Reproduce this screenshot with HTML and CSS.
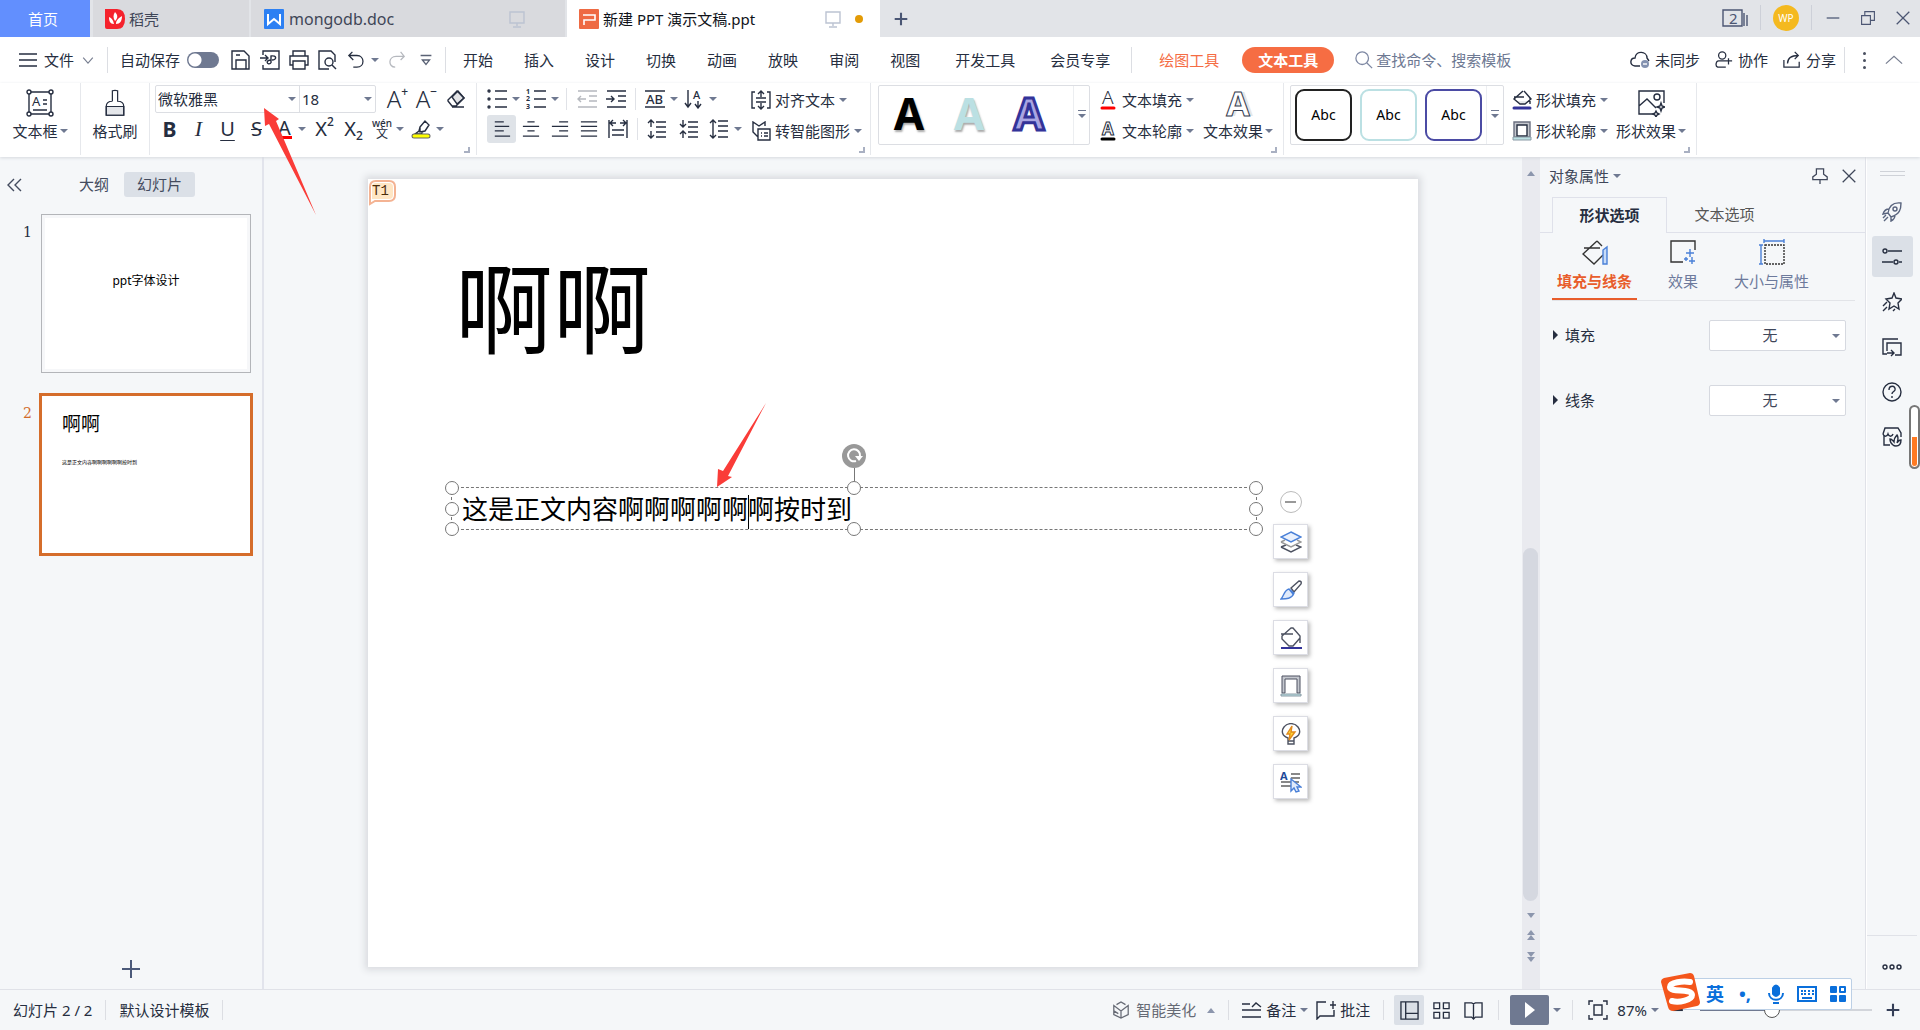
FILE: index.html
```
<!DOCTYPE html>
<html lang="zh-CN">
<head>
<meta charset="utf-8">
<title>新建 PPT 演示文稿.ppt</title>
<link rel="stylesheet" href="styles.css">
</head>
<body>
<svg class="sprite" aria-hidden="true">
  <symbol id="menu" viewBox="0 0 20 20"><path d="M1 4h18M1 10h18M1 16h18"/></symbol>
  <symbol id="down" viewBox="0 0 20 20"><path d="M4 7l6 7 6-7"/></symbol>
  <symbol id="up" viewBox="0 0 20 20"><path d="M1 14l9-8 9 8"/></symbol>
  <symbol id="save" viewBox="0 0 20 20"><path d="M1 1h12l5 5v13H1zM5 19v-9h10v9M5 5h4"/></symbol>
  <symbol id="export" viewBox="0 0 20 20"><path d="M3 5V1h16v18H3v-4M0 8h7M5 5l3 3-3 3M11 13V6c6-1 6 4 1 4M11 10c-6 0-4 6 0 3"/></symbol>
  <symbol id="print" viewBox="0 0 20 20"><path d="M4 6V1h12v5M4 15H1V6h18v9h-3M4 11h12v8H4z"/></symbol>
  <symbol id="preview" viewBox="0 0 20 20"><path d="M11 19H1V1h12l4 4v7"/><circle cx="11" cy="12" r="4"/><path d="M14 15l4 4"/></symbol>
  <symbol id="undo" viewBox="0 0 20 20"><path d="M6 1L2 5l5 5M2 5h9c9 0 9 13 0 13H7"/></symbol>
  <symbol id="redo" viewBox="0 0 20 20"><path d="M14 1l4 5-4 4M18 6H9c-9 0-9 12-1 12"/></symbol>
  <symbol id="more" viewBox="0 0 20 20"><path d="M4 5h12M6 10l4 5 4-5z"/></symbol>
  <symbol id="search" viewBox="0 0 20 20"><circle cx="8" cy="8" r="7"/><path d="M13 13l6 6"/></symbol>
  <symbol id="cloud" viewBox="0 0 20 20"><path d="M10 16H5c-6-1-5-8 0-8 1-8 12-7 12 0l2 3"/><circle cx="15" cy="14" r="4" fill="#8492b0" stroke="none"/><path stroke="#fff" d="M13 14h4"/></symbol>
  <symbol id="people" viewBox="0 0 20 20"><circle cx="8" cy="5" r="4"/><path d="M12 18H3c-3-1-2-7 1-7h8M15 8v7M12 11h7"/></symbol>
  <symbol id="share" viewBox="0 0 20 20"><path d="M1 10v8h17v-6M5 14c0-7 6-9 12-9M13 1l4 4-4 4"/></symbol>
  <symbol id="textbox" viewBox="0 0 28 28"><path d="M3 3h22v22H3zM7 21h14M17 11h4M17 15h4"/><g fill="#fff"><circle cx="3" cy="3" r="2"/><circle cx="25" cy="3" r="2"/><circle cx="3" cy="25" r="2"/><circle cx="25" cy="25" r="2"/></g><text class="glyph" x="6" y="17" font-size="13">A</text></symbol>
  <symbol id="brush" viewBox="0 0 28 32"><path fill="#e4e6ea" d="M4 20h20v10H4z"/><path d="M11 14V2q3-1 6 0v12q7 0 7 6v10H4V20q0-6 7-6"/></symbol>
  <symbol id="eraser" viewBox="0 0 20 20"><path fill="#e2e3e6" d="M6 8l6-6 6 7-7 6z"/><path d="M2 11l9-9 7 7-8 8H6l-4-5zM6 18h12"/></symbol>
  <symbol id="highlight" viewBox="0 0 20 20"><path d="M9 8l5-6 4 4-4 6-5 1zM9 8l-1 4-4 3h6l2-2"/><path stroke="#666" stroke-width="5" stroke-linecap="round" d="M3 17h14"/><path stroke="#ff0" stroke-width="3" stroke-linecap="round" d="M3 17h14"/></symbol>
  <symbol id="bullets" viewBox="0 0 20 20"><path d="M8 2h12M8 10h12M8 18h12"/><circle cx="2" cy="2" r="1"/><circle cx="2" cy="10" r="1"/><circle cx="2" cy="18" r="1"/></symbol>
  <symbol id="numbers" viewBox="0 0 20 20"><path d="M8 2h12M8 10h12M8 18h12"/><g class="glyph heavy" font-size="7"><text x="0" y="5">1</text><text x="0" y="12">2</text><text x="0" y="20">3</text></g></symbol>
  <symbol id="outdent" viewBox="0 0 20 20"><path d="M1 2h19M12 7h8M12 12h8M1 18h19M9 10H1M4 7l-3 3 3 3"/></symbol>
  <symbol id="indent" viewBox="0 0 20 20"><path d="M1 2h19M12 7h8M12 12h8M1 18h19M0 10h8M5 7l3 3-3 3"/></symbol>
  <symbol id="ab" viewBox="0 0 20 20"><path d="M0 2h20M0 18h20"/><text class="glyph medium" x="1" y="15" font-size="13">AB</text></symbol>
  <symbol id="sort" viewBox="0 0 20 20"><path d="M4 1v17M1 14l3 4 3-4M14 12v6M11 15l3 4 3-4"/><text class="glyph medium" x="9" y="10" font-size="11">A</text></symbol>
  <symbol id="al-left" viewBox="0 0 20 20"><path d="M2 2h10M2 7h16M2 12h10M2 18h17"/></symbol>
  <symbol id="al-center" viewBox="0 0 20 20"><path d="M6 2h8M1 7h18M6 12h8M1 18h18"/></symbol>
  <symbol id="al-right" viewBox="0 0 20 20"><path d="M9 2h10M1 7h18M9 12h10M1 18h18"/></symbol>
  <symbol id="al-full" viewBox="0 0 20 20"><path d="M1 2h18M1 7h18M1 12h18M1 18h18"/></symbol>
  <symbol id="distribute" viewBox="0 0 20 20"><path d="M1 1v18M19 1v18M3 4h5M12 4h5M5 1L2 4l3 3M15 1l3 3-3 3M4 11h12M4 16h12"/></symbol>
  <symbol id="sp-up" viewBox="0 0 20 20"><path d="M9 3h10M9 8h10M9 13h10M9 18h10M4 1v7M1 4l3-3 3 3M4 12v7M1 16l3 3 3-3"/></symbol>
  <symbol id="sp-down" viewBox="0 0 20 20"><path d="M9 3h10M9 8h10M9 13h10M9 18h10M4 1v7M1 5l3 3 3-3M4 12v7M1 15l3-3 3 3"/></symbol>
  <symbol id="sp-line" viewBox="0 0 20 20"><path d="M9 2h10M9 7h10M9 12h10M9 18h10M4 1v18M1 4l3-3 3 3M1 16l3 3 3-3"/></symbol>
  <symbol id="al-text" viewBox="0 0 20 20"><path d="M4 2H1v16h3M16 2h3v16h-3M5 8h10M5 12h10M10 7V1M7 4l3-3 3 3M10 13v6M7 16l3 3 3-3"/></symbol>
  <symbol id="smart" viewBox="0 0 20 20"><path d="M7 16l-5-5V1l6 4 6-4v4M7 8h12v11H7zM10 12h1M13 12h4M10 15h1M13 15h4"/></symbol>
  <symbol id="textfill" viewBox="0 0 20 20"><text class="glyph light" x="4" y="14" font-size="19">A</text><path stroke="#f00" stroke-width="3" stroke-linecap="round" d="M4 18h12"/></symbol>
  <symbol id="textline" viewBox="0 0 20 20"><text class="glyph-outline" x="4" y="14" font-size="17">A</text><path stroke="#000" stroke-width="3" stroke-linecap="round" d="M4 18h12"/></symbol>
  <symbol id="bucket" viewBox="0 0 20 20"><path fill="#e8eaec" stroke="none" d="M4 11h13l-4 4H8z"/><path d="M2 7h10M11 1L2 9l6 5h5l6-5-7-8M18 8v6"/><path stroke="#333399" stroke-width="3" stroke-linecap="round" d="M2 18h16"/></symbol>
  <symbol id="frame" viewBox="0 0 20 20"><path fill="#c4c7ce" stroke="#6b7080" d="M2 1h16v15H2z"/><path fill="#fff" d="M5 4h10v11H5z"/><path fill="#bbe0e3" stroke="#8a9aa5" stroke-width="1" d="M1 16h18v3H1z"/></symbol>
  <symbol id="can" viewBox="0 0 22 22"><path d="M1 7h12M11 1L2 9v3l7 7h4l7-8v-2l-7-8zM20 9v7"/><path stroke="#333399" stroke-width="2" d="M1 21h21"/></symbol>
  <symbol id="stand" viewBox="0 0 22 22"><path fill="#c4c7ce" stroke-width="1" d="M2 18V1h18v17h-3V4H5v14z"/><path fill="#bbe0e3" stroke="#8a9aa5" stroke-width="1" d="M1 19h20v2H1z"/></symbol>
  <symbol id="fx" viewBox="0 0 28 28"><path d="M16 25H2V2h25v12M2 17l8-7 9 9"/><circle cx="20" cy="8" r="3"/><path d="M24 14l1 3 3 1-3 1-1 3-1-3-3-1 3-1zM19 22l1 2 2 1-2 1-1 2-1-2-2-1 2-1z"/></symbol>
  <symbol id="screen" viewBox="0 0 20 20"><path d="M3 3h14v11H3zM10 14v3M6 18h8"/></symbol>
  <symbol id="min" viewBox="0 0 20 20"><path d="M3 10h14"/></symbol>
  <symbol id="restore" viewBox="0 0 20 20"><path d="M2 7h11v11H2zM6 7V2h12v11h-5"/></symbol>
  <symbol id="close" viewBox="0 0 20 20"><path d="M3 3l14 14M17 3L3 17"/></symbol>
  <symbol id="plus" viewBox="0 0 20 20"><path d="M10 1v18M1 10h18"/></symbol>
  <symbol id="windows" viewBox="0 0 26 20"><path d="M1 2h19v16H1zM22 5v13M25 7v11"/><text class="glyph" x="7" y="16" font-size="15">2</text></symbol>
  <symbol id="collapse" viewBox="0 0 20 20"><path d="M9 4l-6 6 6 6M16 4l-6 6 6 6"/></symbol>
  <symbol id="pin" viewBox="0 0 20 20"><path d="M6 2h8v6l4 3v3H2v-3l4-3zM10 14v5"/></symbol>
  <symbol id="fillline" viewBox="0 0 26 26"><path d="M2 9h16M15 2L1 15l11 10 9-9M15 2l5 5"/><path fill="#c8dcf8" stroke="#4a80d8" d="M21 11l4-3v17h-4z"/></symbol>
  <symbol id="effect" viewBox="0 0 26 26"><path d="M13 23H1V2h24v9"/><path stroke="#4a80d8" d="M20 10v8M16 14h8M22 18v7M19 22h6M14 20h4M16 18v4"/></symbol>
  <symbol id="size" viewBox="0 0 26 26"><path stroke="#4a80d8" d="M5 2h20M5 0v4M25 0v4M2 6v19M0 6h4M0 25h4"/><path stroke-dasharray="2 1" d="M6 6h19v19H6z"/></symbol>
  <symbol id="rocket" viewBox="0 0 20 20"><path d="M9 15c9-3 10-8 10-14-8-1-12 3-13 10zM7 7c-3 0-5 2-6 5l5-1M13 13c0 3-2 5-4 6v-4M4 13l-3 3M6 15l-4 4"/><circle cx="13" cy="7" r="2"/></symbol>
  <symbol id="sliders" viewBox="0 0 20 20"><path d="M6 4h14M0 15h11M17 15h3"/><circle cx="3" cy="4" r="2"/><circle cx="14" cy="15" r="2"/></symbol>
  <symbol id="star" viewBox="0 0 20 20"><path d="M12 1l2 5 6 1-4 4 1 6-5-3-5 3 1-6-4-4 6-1zM5 10l-4 4M5 15l-4 4M13 17l-2 2"/></symbol>
  <symbol id="swap" viewBox="0 0 20 20"><path d="M5 17H1V2h15M5 14V6h14v12h-6M5 16h7M9 13l3 3-3 3"/></symbol>
  <symbol id="help" viewBox="0 0 20 20"><circle cx="10" cy="10" r="9"/><path d="M7 8c0-5 7-5 6 0-1 2-3 2-3 4M10 14v2"/></symbol>
  <symbol id="shop" viewBox="0 0 20 20"><path d="M2 9v9h6M1 7l2-6h13l3 5v4M1 7c1 3 4 3 5 0 1 3 4 3 5 0M11 18c-3-2-3-4-3-6 2 0 3 2 4 3 0-3 1-5 3-7 2 3 1 5 0 8 1-2 2-3 4-3 0 4-2 6-5 6-1 0-2 0-3-1z"/></symbol>
  <symbol id="dots" viewBox="0 0 20 20"><circle cx="3" cy="10" r="2"/><circle cx="10" cy="10" r="2"/><circle cx="17" cy="10" r="2"/></symbol>
  <symbol id="layers" viewBox="0 0 22 22"><path d="M1 16l10 5 10-5-5-2M1 16l5-2"/><path stroke="#999" d="M1 11l10 5 10-5-4-2M1 11l4-2"/><path stroke="#4a80d8" fill="#eaf1fd" d="M11 1l10 5-10 5L1 6z"/></symbol>
  <symbol id="paint" viewBox="0 0 22 22"><path d="M11 9l8-7q3 0 2 3l-7 8z"/><path stroke="#4a80d8" fill="#dfeafb" d="M9 10l5 4c-2 6-8 6-13 6 3-3 3-9 8-10zM9 10l4 5"/></symbol>
  <symbol id="bulb" viewBox="0 0 22 22"><path d="M8 18v-3C2 13 1 8 4 4c4-5 11-4 14 0s2 9-4 11v3zM8 21h6v-3H8z"/><path stroke="#e08a1e" fill="#ffd633" d="M12 3l-5 8h3l-1 6 6-8h-4z"/></symbol>
  <symbol id="pick" viewBox="0 0 22 22"><path stroke="#888" stroke-width="2" d="M11 3h9M11 7h9M1 11h18M1 15h10"/><text class="glyph heavy navy" x="0" y="9" font-size="11">A</text><path stroke="#4a80d8" fill="#dfeafb" d="M11 8l10 8-4 0 2 4-3 1-2-4-3 3z"/></symbol>
  <symbol id="rotate" viewBox="0 0 24 24"><circle cx="12" cy="12" r="12" fill="#999" stroke="none"/><path stroke="#fff" stroke-width="2" d="M14 17a6 6 0 1 1 4-5"/><path fill="#fff" stroke="none" d="M13 12h8l-4 5z"/></symbol>
  <symbol id="beauty" viewBox="0 0 20 20"><path d="M5 4l5-3 5 3M2 5v10l8 4 8-4V5l-8 6zM10 11v8M2 11l5 3"/></symbol>
  <symbol id="note" viewBox="0 0 20 20"><path d="M0 4h8M0 10h19M0 17h19M10 7l4-4 5 4"/></symbol>
  <symbol id="comment" viewBox="0 0 20 20"><path d="M10 2H1v17l3-3h14v-6M14 5h6M17 1v8"/></symbol>
  <symbol id="normal" viewBox="0 0 20 20"><path d="M1 1h18v18H1zM6 1v18M6 13h13"/></symbol>
  <symbol id="grid" viewBox="0 0 20 20"><path d="M2 2h6v6H2zM12 2h6v6h-6zM2 12h6v6H2zM12 12h6v6h-6z"/></symbol>
  <symbol id="book" viewBox="0 0 20 20"><path d="M10 3v16M1 2h7l2 1 2-1h7v15h-7l-2 2-2-2H1z"/></symbol>
  <symbol id="fit" viewBox="0 0 20 20"><path d="M1 5V1h4M15 1h4v4M19 15v4h-4M5 19H1v-4M6 5h8v10H6z"/></symbol>
  <symbol id="mic" viewBox="0 0 20 20"><path fill="#0a6fdb" d="M7 4q3-5 6 0v6q-3 4-6 0z"/><path d="M3 9c0 9 14 9 14 0M7 19h6"/></symbol>
  <symbol id="keys" viewBox="0 0 20 20"><path d="M1 3h18v14H1zM4 7h2M7 7h2M11 7h2M15 7h2M4 10h2M7 10h2M11 10h2M15 10h2M5 14h10"/></symbol>
  <symbol id="apps" viewBox="0 0 20 20"><path fill="#0a6fdb" stroke-linejoin="round" d="M3 3h5v5H3zM3 12h5v5H3zM12 12h5v5h-5z"/><path stroke-linejoin="round" d="M12 3h5v5h-5z"/></symbol>
</svg>

<header class="titlebar">
  <nav class="filetabs">
    <button class="ftab home">首页</button>
    <button class="ftab dk"><svg class="logo" viewBox="0 0 20 20"><path fill="#f5222d" d="M0 0h12q8 0 8 10t-8 10H2q-2 0-2-2z"/><path fill="#fff" d="M10 3c3 3 3 6 0 9-2-3-2-6 0-9zM4 8c3 1 4 3 5 7-4 0-5-3-5-7zM17 7c0 5-2 8-6 8 0-4 3-6 6-8z"/></svg>稻壳</button>
    <button class="ftab doc"><svg class="logo" viewBox="0 0 20 20"><rect width="20" height="20" rx="1" fill="#2c80f3"/><path stroke="#fff" fill="none" stroke-width="2" d="M4 5v10l6-5 6 5V5"/></svg><span class="latin">mongodb.doc</span><svg class="i pale end"><use href="#screen"/></svg></button>
    <button class="ftab active"><svg class="logo" viewBox="0 0 20 20"><rect width="20" height="20" rx="1" fill="#ee6a43"/><path stroke="#fff" fill="none" stroke-width="1.6" d="M4 6h12v5H5v5"/></svg>新建 PPT 演示文稿.ppt<svg class="i pale end"><use href="#screen"/></svg><span class="unsaved"></span></button>
    <button class="newtab" aria-label="新建"><svg class="i s14 thick"><use href="#plus"/></svg></button>
  </nav>
  <div class="wincontrols">
    <button aria-label="窗口"><svg class="i w26"><use href="#windows"/></svg></button>
    <i class="vline"></i>
    <span class="avatar">WP</span>
    <i class="vline"></i>
    <button aria-label="最小化"><svg class="i s18"><use href="#min"/></svg></button>
    <button aria-label="还原"><svg class="i s16"><use href="#restore"/></svg></button>
    <button aria-label="关闭"><svg class="i s18"><use href="#close"/></svg></button>
  </div>
</header>

<div class="menubar">
  <button class="filemenu"><svg class="i"><use href="#menu"/></svg>文件<svg class="i s16 grey"><use href="#down"/></svg></button>
  <div class="quick">
    <label class="autosave">自动保存<input type="checkbox" class="toggle"></label>
    <button aria-label="保存"><svg class="i"><use href="#save"/></svg></button>
    <button aria-label="导出"><svg class="i"><use href="#export"/></svg></button>
    <button aria-label="打印"><svg class="i"><use href="#print"/></svg></button>
    <button aria-label="预览"><svg class="i"><use href="#preview"/></svg></button>
    <button aria-label="撤销"><svg class="i s18"><use href="#undo"/></svg><i class="caret"></i></button>
    <button aria-label="恢复"><svg class="i s18 faded"><use href="#redo"/></svg></button>
    <button aria-label="更多" class="overflow"><svg class="i s18"><use href="#more"/></svg></button>
  </div>
  <nav class="menus">
    <a href="#">开始</a><a href="#">插入</a><a href="#">设计</a><a href="#">切换</a><a href="#">动画</a><a href="#">放映</a><a href="#">审阅</a><a href="#">视图</a><a href="#" class="long">开发工具</a><a href="#" class="long">会员专享</a>
  </nav>
  <nav class="context"><a href="#">绘图工具</a><a href="#" class="current">文本工具</a></nav>
  <label class="search"><svg class="i s18"><use href="#search"/></svg><input type="text" placeholder="查找命令、搜索模板"></label>
  <div class="account">
    <button><svg class="i"><use href="#cloud"/></svg>未同步</button>
    <button><svg class="i s18"><use href="#people"/></svg>协作</button>
    <button><svg class="i s18"><use href="#share"/></svg>分享</button>
    <span class="kebab" aria-hidden="true"><i></i><i></i><i></i></span>
    <button aria-label="折叠"><svg class="i s18 grey"><use href="#up"/></svg></button>
  </div>
</div>

<div class="ribbon">
  <section class="group"><button class="big"><svg class="i s28"><use href="#textbox"/></svg><span>文本框<i class="caret"></i></span></button></section>
  <section class="group"><button class="big"><svg class="i s28"><use href="#brush"/></svg><span>格式刷</span></button></section>
  <section class="group fontgroup">
    <div class="row">
      <div class="combos">
        <span class="combo family"><input type="text" value="微软雅黑" aria-label="字体"><i class="caret"></i></span>
        <span class="combo fsize"><input type="text" value="18" aria-label="字号"><i class="caret"></i></span>
      </div>
      <button class="tool letter big-a">A<sup>+</sup></button>
      <button class="tool letter big-a">A<sup>−</sup></button>
      <button class="tool" aria-label="清除格式"><svg class="i"><use href="#eraser"/></svg></button>
    </div>
    <div class="row">
      <button class="tool letter strong">B</button>
      <button class="tool letter italic">I</button>
      <button class="tool letter underline">U</button>
      <button class="tool letter strike">S</button>
      <button class="tool letter"><span class="colour-a">A</span><i class="caret"></i></button>
      <button class="tool letter">X<sup>2</sup></button>
      <button class="tool letter">X<sub>2</sub></button>
      <button class="tool letter pinyin"><span><small>wén</small>文</span><i class="caret"></i></button>
      <button class="tool" aria-label="突出显示"><svg class="i"><use href="#highlight"/></svg><i class="caret"></i></button>
    </div>
    <i class="corner"></i>
  </section>
  <section class="group paragroup">
    <div class="stack">
      <div class="row">
        <button class="tool" aria-label="项目符号"><svg class="i"><use href="#bullets"/></svg><i class="caret"></i></button>
        <button class="tool" aria-label="编号"><svg class="i"><use href="#numbers"/></svg><i class="caret"></i></button>
        <i class="sep"></i>
        <button class="tool" aria-label="减少缩进"><svg class="i faded"><use href="#outdent"/></svg></button>
        <button class="tool" aria-label="增加缩进"><svg class="i"><use href="#indent"/></svg></button>
        <i class="sep"></i>
        <button class="tool" aria-label="字符间距"><svg class="i"><use href="#ab"/></svg><i class="caret"></i></button>
        <button class="tool" aria-label="文字方向"><svg class="i"><use href="#sort"/></svg><i class="caret"></i></button>
      </div>
      <div class="row second">
        <button class="tool on" aria-label="左对齐"><svg class="i s18"><use href="#al-left"/></svg></button>
        <button class="tool" aria-label="居中"><svg class="i s18"><use href="#al-center"/></svg></button>
        <button class="tool" aria-label="右对齐"><svg class="i s18"><use href="#al-right"/></svg></button>
        <button class="tool" aria-label="两端对齐"><svg class="i s18"><use href="#al-full"/></svg></button>
        <button class="tool" aria-label="分散对齐"><svg class="i"><use href="#distribute"/></svg></button>
        <i class="sep"></i>
        <button class="tool wide" aria-label="增大段距"><svg class="i"><use href="#sp-up"/></svg></button>
        <button class="tool wide" aria-label="减小段距"><svg class="i"><use href="#sp-down"/></svg></button>
        <button class="tool wide" aria-label="行距"><svg class="i"><use href="#sp-line"/></svg><i class="caret"></i></button>
      </div>
    </div>
    <div class="stack">
      <button class="item"><svg class="i"><use href="#al-text"/></svg>对齐文本<i class="caret"></i></button>
      <button class="item"><svg class="i"><use href="#smart"/></svg>转智能图形<i class="caret"></i></button>
    </div>
    <i class="corner"></i>
  </section>
  <section class="group stylegroup">
    <div class="gallery">
      <button class="art black">A</button><button class="art mint">A</button><button class="art indigo">A</button>
      <button class="expand" aria-label="更多样式"><i class="caret"></i></button>
    </div>
    <div class="stack">
      <button class="item"><svg class="i"><use href="#textfill"/></svg>文本填充<i class="caret"></i></button>
      <button class="item"><svg class="i"><use href="#textline"/></svg>文本轮廓<i class="caret"></i></button>
    </div>
    <button class="big"><span class="hollow">A</span><span>文本效果<i class="caret"></i></span></button>
    <i class="corner"></i>
  </section>
  <section class="group stylegroup shapes">
    <div class="gallery">
      <button class="abc black">Abc</button><button class="abc mint">Abc</button><button class="abc indigo">Abc</button>
      <button class="expand" aria-label="更多形状样式"><i class="caret"></i></button>
    </div>
    <div class="stack">
      <button class="item"><svg class="i"><use href="#bucket"/></svg>形状填充<i class="caret"></i></button>
      <button class="item"><svg class="i"><use href="#frame"/></svg>形状轮廓<i class="caret"></i></button>
    </div>
    <button class="big"><svg class="i s28"><use href="#fx"/></svg><span>形状效果<i class="caret"></i></span></button>
    <i class="corner"></i>
  </section>
</div>

<main class="workspace">
  <aside class="slides-pane">
    <div class="pane-tabs">
      <button aria-label="收起"><svg class="i"><use href="#collapse"/></svg></button>
      <button class="otab">大纲</button>
      <button class="otab on">幻灯片</button>
    </div>
    <ol class="thumbs">
      <li><span class="num">1</span><div class="thumb first">ppt字体设计</div></li>
      <li class="selected"><span class="num">2</span><div class="thumb"><b>啊啊</b><p>这是正文内容啊啊啊啊啊啊按时到</p></div></li>
    </ol>
    <button class="addslide" aria-label="新建幻灯片"><svg class="i thick"><use href="#plus"/></svg></button>
  </aside>

  <section class="canvas">
    <article class="slide">
      <svg class="tagshape" viewBox="0 0 30 27"><path fill="#fff" stroke="#f4b393" stroke-width="2" d="M2 25V8q0-6 6-6h13q6 0 6 6v8q0 6-6 6H7z"/><path fill="#ffe6c4" d="M4 8q0-4 4-4h13q4 0 4 4v8q0 4-4 4H4z"/></svg>
      <span class="tag">T1</span>
      <h1>啊啊</h1>
      <div class="textframe">
        <p>这是正文内容啊啊啊啊啊<i class="cursor"></i>啊按时到</p>
        <i class="h left top"></i><i class="h centre top"></i><i class="h right top"></i><i class="h left middle"></i><i class="h right middle"></i><i class="h left bottom"></i><i class="h centre bottom"></i><i class="h right bottom"></i>
        <i class="stem"></i><svg class="rot"><use href="#rotate"/></svg>
      </div>
      <div class="floating">
        <button class="fold" aria-label="收起"></button>
        <button aria-label="图层"><svg class="i s22"><use href="#layers"/></svg></button>
        <button aria-label="格式"><svg class="i s22"><use href="#paint"/></svg></button>
        <button aria-label="填充"><svg class="i s22"><use href="#can"/></svg></button>
        <button aria-label="轮廓"><svg class="i s22"><use href="#stand"/></svg></button>
        <button aria-label="灵感"><svg class="i s22"><use href="#bulb"/></svg></button>
        <button aria-label="选择"><svg class="i s22"><use href="#pick"/></svg></button>
      </div>
      <svg class="arrow-body" viewBox="0 0 50 85"><path fill="#fa3c38" d="M0 84L1 66l5 2L49 0 11 73l4 1z"/></svg>
    </article>
  </section>

  <div class="scroller">
    <i class="tri-up"></i>
    <i class="thumbbar"></i>
    <i class="tri-down"></i>
    <span><i class="tri-up"></i><i class="tri-up"></i></span>
    <span><i class="tri-down"></i><i class="tri-down"></i></span>
  </div>

  <aside class="props">
    <div class="props-head"><button>对象属性<i class="caret"></i></button><button class="end" aria-label="固定"><svg class="i s18"><use href="#pin"/></svg></button><button aria-label="关闭"><svg class="i s18"><use href="#close"/></svg></button></div>
    <div class="props-tabs"><button class="on">形状选项</button><button>文本选项</button></div>
    <div class="subtabs">
      <button class="on"><svg class="i s26"><use href="#fillline"/></svg>填充与线条</button>
      <button><svg class="i s26"><use href="#effect"/></svg>效果</button>
      <button><svg class="i s26"><use href="#size"/></svg>大小与属性</button>
    </div>
    <div class="field"><label for="fill">填充</label><span class="choice"><select id="fill"><option>无</option></select><i class="caret"></i></span></div>
    <div class="field"><label for="line">线条</label><span class="choice"><select id="line"><option>无</option></select><i class="caret"></i></span></div>
  </aside>

  <aside class="sidebar">
    <i class="grip"></i>
    <button aria-label="推荐" class="slate"><svg class="i"><use href="#rocket"/></svg></button>
    <button aria-label="属性" class="on"><svg class="i"><use href="#sliders"/></svg></button>
    <button aria-label="动画"><svg class="i"><use href="#star"/></svg></button>
    <button aria-label="切换"><svg class="i"><use href="#swap"/></svg></button>
    <button aria-label="帮助"><svg class="i"><use href="#help"/></svg></button>
    <button aria-label="商城"><svg class="i"><use href="#shop"/></svg></button>
    <button aria-label="更多" class="dots"><svg class="i"><use href="#dots"/></svg></button>
    <i class="gauge"></i>
  </aside>
</main>

<footer class="status">
  <div class="sgroup">幻灯片 2 / 2</div>
  <div class="sgroup">默认设计模板</div>
  <div class="sgroup push muted"><svg class="i s18"><use href="#beauty"/></svg>智能美化<i class="tri-up"></i></div>
  <div class="sgroup"><button><svg class="i"><use href="#note"/></svg>备注<i class="caret"></i></button><button><svg class="i"><use href="#comment"/></svg>批注</button></div>
  <div class="sgroup views">
    <button class="on" aria-label="普通视图"><svg class="i"><use href="#normal"/></svg></button>
    <button aria-label="浏览视图"><svg class="i"><use href="#grid"/></svg></button>
    <button aria-label="阅读视图"><svg class="i"><use href="#book"/></svg></button>
  </div>
  <div class="sgroup present"><button class="play" aria-label="放映"></button><i class="caret"></i></div>
  <div class="zoom"><svg class="i"><use href="#fit"/></svg><span class="pct">87%<i class="caret"></i></span><button aria-label="缩小"><svg class="i s14 thick"><use href="#min"/></svg></button><input type="range" min="0" max="100" value="41" aria-label="缩放"><button aria-label="放大"><svg class="i s14 thick dark"><use href="#plus"/></svg></button></div>
</footer>

<div class="ime">
  <svg class="sogou" viewBox="0 0 40 38"><path fill="#f4561c" d="M3 5L29 0q3 0 4 3l6 26q0 3-3 4L12 38q-4 0-5-4L0 9q0-3 3-4z"/><path fill="none" stroke="#fff" stroke-width="6" stroke-linecap="round" d="M29 9c-7-1-20 0-20 5 0 6 22 1 22 8 0 5-13 8-20 6"/></svg>
  <b>英</b><b class="punct">•,</b><svg class="i"><use href="#mic"/></svg><svg class="i"><use href="#keys"/></svg><svg class="i"><use href="#apps"/></svg>
</div>
<svg class="arrow-font" viewBox="0 0 52 108"><path fill="#fa3c38" d="M0 0l1 18 4-2 47 91L12 13l3-2z"/></svg>
</body>
</html>
```
FILE: styles.css
```
* { box-sizing: border-box; }
body {
  margin: 0;
  min-height: 100vh;
  display: grid;
  grid-template-rows: 37px 46px 74px 1fr 41px;
  font: 15px/20px "Noto Sans", "Noto Sans CJK SC", sans-serif;
  color: #262e40;
  background: #f5f7f9;
  position: relative;
  overflow: hidden;
}
button, input, select { font: inherit; color: inherit; border: 0; background: none; padding: 0; margin: 0; outline: 0; }
button { display: flex; align-items: center; white-space: nowrap; }
a { color: inherit; text-decoration: none; white-space: nowrap; }
i { font-style: normal; }

.sprite { display: none; }
.i { width: 20px; height: 20px; flex: none; fill: none; stroke: currentColor; stroke-width: 1.4; overflow: visible; display: block; }
.i.s14 { width: 14px; height: 14px; }
.i.s16 { width: 16px; height: 16px; }
.i.s18 { width: 18px; height: 18px; }
.i.s22 { width: 22px; height: 22px; }
.i.s26 { width: 26px; height: 26px; }
.i.s28 { width: 28px; height: 28px; }
.i.w26 { width: 26px; }
.i.thick { stroke-width: 3; }
.addslide .i.thick { stroke-width: 2; }
.pale { color: #bcc3d2; }
.grey { color: #777e90; }
.faded { color: #b5b8be; }
.dark { color: #343e57; }
.glyph { fill: currentColor; stroke: none; font-family: "Noto Sans", sans-serif; }
.glyph.heavy { font-weight: 700; }
.glyph.medium { font-weight: 500; }
.glyph.light { font-weight: 300; }
.navy { fill: #1f4a99; }
.glyph-outline { font-family: "Noto Sans", sans-serif; font-weight: 700; fill: #fff; stroke: #262e40; stroke-width: 1; }
.end { margin-left: auto; }

.caret { flex: none; width: 0; height: 0; border: 4px solid transparent; border-top-color: #6f7991; border-bottom: 0; }
.tri-up { width: 0; height: 0; border: 4px solid transparent; border-bottom: 5px solid #8c96ad; border-top: 0; }
.tri-down { width: 0; height: 0; border: 4px solid transparent; border-top: 5px solid #8c96ad; border-bottom: 0; }

/* title bar */
.titlebar { display: flex; justify-content: space-between; background: #e2e4e8; }
.filetabs { display: flex; color: #3f4657; }
.ftab { height: 37px; margin-right: 2px; background: #d9dade; }
.logo { width: 20px; height: 20px; margin-right: 4px; flex: none; }
.ftab.home { width: 90px; margin-right: 3px; padding-right: 4px; justify-content: center; background: #628ffe; color: #fff; }
.ftab.dk { width: 156px; padding: 0 12px; }
.ftab.doc { width: 314px; padding: 0 38px 0 13px; }
.latin { font-size: 16px; margin-left: 1px; }
.ftab.active { width: 313px; padding: 0 17px 0 12px; background: #fff; color: #10131a; margin: 0; }
.unsaved { width: 8px; height: 8px; border-radius: 50%; background: #e39b06; margin-left: 12px; }
.newtab { padding: 0 14px; color: #4a5674; }
.wincontrols { display: flex; align-items: center; gap: 12px; padding: 0 8px 2px 0; color: #4c5673; }
.wincontrols button + button { margin-left: 6px; }
.vline { width: 1px; height: 25px; background: #cdd0d8; }
.avatar { width: 26px; height: 26px; border-radius: 50%; background: #f4b91f; color: #fff; font-size: 10px; line-height: 26px; text-align: center; }

/* menu bar */
.menubar { display: flex; align-items: center; background: #fff; padding-left: 18px; }
.filemenu { gap: 6px; border-right: 1px solid #dcdee3; height: 26px; padding-right: 11px; }
.quick { display: flex; align-items: center; gap: 9px; height: 26px; padding: 0 10px 0 12px; border-right: 1px solid #dcdee3; }
.quick button { gap: 6px; }
.quick .overflow { margin-left: 2px; color: #5a6275; }
.autosave { display: flex; align-items: center; gap: 7px; white-space: nowrap; }
.toggle { appearance: none; width: 32px; height: 16px; border-radius: 8px; margin-right: 3px; background: radial-gradient(circle at 8px 8px, #fff 6px, #6f7991 7px); }
.menus { display: flex; gap: 31px; padding-left: 17px; }
.menus .long { margin-left: 4px; }
.context { display: flex; align-items: center; gap: 23px; margin-left: 21px; border-left: 1px solid #dcdee3; padding-left: 27px; color: #f56c43; height: 26px; }
.current { background: #f66d43; color: #fff; font-weight: 700; border-radius: 13px; padding: 3px 16px; }
.search { display: flex; align-items: center; gap: 3px; margin-left: 21px; color: #7e88a3; }
.search input { width: 150px; }
.search input::placeholder { color: #6d7892; }
.account { display: flex; align-items: center; gap: 15px; margin-left: auto; padding-right: 17px; }
.account button { gap: 5px; }
.kebab { display: grid; gap: 4px; align-content: center; height: 26px; border-left: 1px solid #dcdee3; padding-left: 18px; margin-left: -7px; margin-right: 4px; }
.kebab i { width: 3px; height: 3px; border-radius: 50%; background: #4a5060; }

/* ribbon */
.ribbon { display: grid; grid-template-columns: 81px 69px 327px 394px 413px 413px; background: #fff; box-shadow: 0 1px 3px #d5d8de; position: relative; z-index: 1; }
.group { position: relative; display: flex; border-right: 1px solid #e6e8ec; height: 72px; padding-top: 1px; }
.corner { position: absolute; right: 6px; bottom: 2px; width: 6px; height: 6px; border: solid #a9b0c2; border-width: 0 2px 2px 0; }
.row { display: flex; align-items: center; height: 30px; }
.stack { display: flex; flex-direction: column; }
.big { flex-direction: column; justify-content: space-between; padding: 5px 0 9px; height: 66px; flex: 1; }
.big > span:last-child { display: flex; align-items: center; gap: 2px; }
.fontgroup { flex-direction: column; padding-left: 5px; }
.combos { display: flex; border: 1px solid #dcdee3; border-radius: 2px; height: 28px; margin-right: 7px; }
.combo { display: flex; align-items: center; padding: 0 3px 0 2px; }
.combo.family { width: 144px; border-right: 1px solid #dcdee3; }
.combo.fsize { width: 75px; }
.combo input { flex: 1; min-width: 0; }
.tool { width: 29px; height: 28px; justify-content: center; gap: 5px; flex: none; border-radius: 3px; }
.tool.wide { width: 32px; }
.tool:has(.caret) { width: 39px; padding-left: 4px; justify-content: flex-start; }
.tool.on { background: #dfe3e8; }
.letter { font-size: 20px; gap: 4px; line-height: 20px; }
.letter sup, .letter sub { font-size: 12px; line-height: 10px; font-weight: 500; align-self: flex-start; margin-left: -4px; }
.letter sup { margin-top: 2px; }
.letter sub { align-self: flex-end; margin-bottom: 2px; }
.big-a { font-size: 24px; font-weight: 300; }
.strong { font-weight: 700; font-size: 21px; }
.italic { font-style: italic; font-family: "Liberation Serif", serif; font-size: 22px; }
.underline { text-decoration: underline; text-underline-offset: 4px; text-decoration-thickness: 1px; }
.strike { text-decoration: line-through; text-decoration-thickness: 1px; }
.colour-a { border-bottom: 3px solid #f00; padding: 0 1px; line-height: 17px; margin: 0 2px; }
.pinyin span { display: grid; justify-items: center; font-size: 12px; line-height: 12px; }
.pinyin small { font-size: 10px; font-weight: 500; line-height: 10px; }
.paragroup { padding-left: 6px; gap: 7px; }
.second { padding-left: 4px; }
.sep { width: 1px; height: 22px; background: #e0e2e7; margin: 0 5px; }
.second .sep { margin: 0 3px 0 5px; }
.item { height: 31px; gap: 4px; }
.paragroup .corner { right: 5px; }
.stylegroup { padding-left: 7px; }
.gallery { display: flex; align-items: center; width: 212px; height: 60px; border: 1px solid #dcdee3; border-radius: 2px; margin: 1px 8px 0 0; flex: none; }
.art { width: 60px; justify-content: center; font: 700 44px/50px "Noto Sans", sans-serif; padding-bottom: 4px; text-shadow: 1px 2px 2px #aaa; }
.art.black { color: #000; }
.art.mint { color: #bbe0e3; }
.art.indigo { color: #a9a5e2; -webkit-text-stroke: 3px #333399; text-shadow: none; }
.expand { width: 16px; margin-left: auto; align-self: stretch; border-left: 1px solid #eceef1; justify-content: center; }
.expand::before { content: ""; position: absolute; width: 8px; height: 1px; margin-top: -10px; background: #6f7991; }
.expand .caret { margin-top: 2px; }
.hollow { font: 700 34px/28px "Noto Sans", sans-serif; color: #fff; -webkit-text-stroke: 1px #343c50; text-shadow: 3px 0 0 #e6e6e6; }
.stylegroup .big { flex: none; width: 78px; margin-left: 5px; }
.shapes { padding-left: 6px; }
.shapes .gallery { width: 214px; gap: 8px; padding-left: 4px; }
.shapes .big { margin-left: 4px; }
.abc { width: 57px; height: 52px; flex: none; justify-content: center; border: 2px solid; border-radius: 9px; font-size: 14px; color: #000; }
.abc.black { border-color: #222; }
.abc.mint { border-color: #bbe0e3; }
.abc.indigo { border-color: #4b4ba4; }
.abc + .expand { flex: 1; margin-left: -4px; }

/* workspace */
.workspace { display: grid; grid-template-columns: 264px minmax(0, 1fr) 18px 326px 54px; }
.slides-pane { border-right: 2px solid #e2e4ec; display: flex; flex-direction: column; }
.pane-tabs { display: flex; align-items: center; padding: 15px 0 0 5px; color: #434b5e; }
.otab { height: 25px; padding: 0 13px 2px; border-radius: 3px; }
.otab:nth-child(2) { margin: 0 2px 0 41px; }
.otab.on { background: #dbe0e7; }
.thumbs { list-style: none; margin: 17px 0 0; padding: 0; display: grid; gap: 20px; }
.thumbs li { display: flex; padding-left: 23px; }
.num { width: 18px; padding-top: 8px; font: 14px/20px "DejaVu Serif", serif; }
.thumb { width: 210px; height: 159px; border: 1px solid #b3b5b9; background: #fff; color: #000; outline: 3px solid #f6f7f9; outline-offset: -4px; }
.thumb.first { text-align: center; font-size: 12px; line-height: 132px; }
.selected .num { color: #d26b2b; width: 16px; padding-top: 10px; }
.selected .thumb { width: 214px; height: 163px; border: 3px solid #d56d2b; padding: 15px 20px; outline: 0; }
.thumb b { font: 19px/24px "Noto Sans CJK SC", sans-serif; display: block; }
.thumb p { font-size: 5px; line-height: 6px; margin: 24px 0 0; white-space: nowrap; }
.addslide { margin: auto auto 10px 121px; color: #4c5a7a; }
.canvas { padding: 22px 104px; }
.slide { position: relative; width: 100%; aspect-ratio: 4 / 3; background: #fff; box-shadow: 0 0 7px 3px #d9dbdf; color: #000; }
.tagshape { position: absolute; left: 0; top: 0; width: 30px; height: 27px; }
.tag { position: absolute; left: 4px; top: 2px; font: 14px/20px "Liberation Mono", monospace; color: #4a2c0a; }
.slide h1 { position: absolute; left: 87px; top: 75px; margin: 0; font: 400 98px/98px "Noto Sans CJK SC", sans-serif; }
.textframe { position: absolute; left: 83px; top: 308px; width: 806px; height: 43px; border: 1px dashed #777; padding: 0 10px; }
.textframe p { margin: 0; font: 26px/40px "Noto Sans CJK SC", sans-serif; white-space: nowrap; }
.cursor { display: inline-block; width: 1px; height: 34px; margin-right: -1px; background: #000; vertical-align: middle; }
.h { position: absolute; width: 14px; height: 14px; border: 1px solid #777; border-radius: 50%; background: #fff; margin: -7px; }
.left { left: 0; }
.centre { left: 50%; }
.right { left: 100%; }
.top { top: 0; }
.middle { top: 50%; }
.bottom { top: 100%; }
.stem { position: absolute; left: 50%; top: -20px; width: 1px; height: 13px; background: #777; }
.rot { position: absolute; left: 50%; top: -44px; width: 24px; height: 24px; margin-left: -12px; fill: none; }
.floating { position: absolute; left: 905px; top: 312px; display: grid; gap: 13px; justify-items: center; color: #4c5160; }
.floating button { width: 35px; height: 35px; justify-content: center; border: 1px solid #dcdde4; background: #fff; box-shadow: 2px 2px 4px #bbb; }
.floating .fold { width: 22px; height: 22px; border: 1px solid #bbb; border-radius: 50%; box-shadow: none; margin-bottom: -2px; }
.fold::after { content: ""; flex: none; width: 11px; height: 2px; background: #999; }
.arrow-body { position: absolute; left: 349px; top: 224px; width: 50px; height: 85px; }
.arrow-font { position: absolute; left: 264px; top: 108px; width: 52px; height: 108px; z-index: 3; }
.scroller { background: #e9eaef; display: flex; flex-direction: column; align-items: center; padding: 14px 2px 27px 1px; gap: 12px; }
.scroller .tri-up:first-child { margin-bottom: auto; }
.thumbbar { width: 15px; height: 353px; border-radius: 8px; background: #d5d8e0; }
.scroller span i { display: block; }

/* properties */
.props { border-right: 1px solid #e0e2e8; }
.props-head { display: flex; align-items: center; height: 40px; padding: 0 7px 2px 9px; gap: 11px; color: #3f475a; }
.props-head button { gap: 4px; }
.props-tabs { display: flex; height: 36px; padding-left: 12px; border-bottom: 1px solid #dfe1ea; }
.props-tabs button { width: 115px; padding-bottom: 2px; justify-content: center; color: #555; }
.props-tabs .on { height: 36px; border: 1px solid #dfe1ea; border-bottom: 0; background: #f5f7f9; font-weight: 700; color: #262e40; }
.subtabs { display: flex; margin: 0 10px 0 12px; border-bottom: 1px solid #e2e4e8; height: 68px; gap: 26px; }
.subtabs button { flex-direction: column; gap: 6px; padding: 6px 5px; color: #6d7a9c; }
.subtabs button .i { color: #333; }
.subtabs .on { color: #e85d2c; border-bottom: 2px solid #e85d2c; font-weight: 700; }
.field { display: flex; align-items: center; justify-content: space-between; padding: 18px 19px 0 13px; height: 50px; }
.field + .field { margin-top: 15px; }
.field label { display: flex; align-items: center; gap: 7px; }
.field label::before { content: ""; border: 5px solid transparent; border-left-color: #262e40; border-right: 0; }
.choice { position: relative; display: flex; }
.choice select { appearance: none; width: 137px; height: 31px; border: 1px solid #d6d9e0; border-radius: 2px; background: #fff; padding: 0 15px 0 0; text-align: center; text-align-last: center; color: #3f475a; }
.choice .caret { position: absolute; right: 6px; top: 14px; }

.sidebar { position: relative; border-left: 1px solid #fff; display: flex; flex-direction: column; align-items: center; gap: 4px; padding-right: 3px; }
.sidebar button { width: 41px; height: 41px; justify-content: center; border-radius: 3px; color: #262e40; }
.sidebar .slate { color: #59647e; }
.sidebar .on { background: #dbe0e7; }
.grip { width: 25px; height: 5px; border: solid #cfd2d8; border-width: 1px 0; margin: 14px 0 11px; }
.sidebar .dots { width: 50px; height: 54px; border-top: 1px solid #e0e2e8; border-radius: 0; margin-top: auto; padding-top: 8px; }
.gauge { position: absolute; right: 0; top: 248px; width: 11px; height: 64px; border: 2px solid #777; border-radius: 6px; background: linear-gradient(#fff 50%, #ff7a22 50%); box-shadow: inset 0 0 0 1px #fff; }

/* status bar */
.status { display: flex; align-items: center; border-top: 1px solid #e0e2e8; position: relative; background: #f5f7f9; }
.sgroup { display: flex; align-items: center; gap: 6px; height: 20px; padding: 0 13px; border-right: 1px solid #dcdee3; white-space: nowrap; }
.sgroup button { gap: 4px; margin-right: 2px; }
.sgroup button:last-of-type { margin-right: 0; }
.push { margin-left: auto; }
.muted { color: #666a75; }
.muted .tri-up { margin-left: 5px; }
.sgroup.views { gap: 2px; padding: 0 10px; }
.views button { width: 30px; height: 30px; justify-content: center; border-radius: 2px; margin: 0; }
.views .i { width: 19px; height: 19px; }
.views .on { background: #dbe0e7; }
.sgroup.present { gap: 4px; padding: 0 11px; }
.play { width: 39px; height: 30px; background: #6f7991; border-radius: 2px; }
.play::after { content: ""; margin-left: 15px; border: 8px solid transparent; border-left: 10px solid #fff; border-right: 0; }
.zoom { display: flex; align-items: center; padding: 0 20px 0 15px; gap: 9px; }
.pct { display: flex; align-items: center; gap: 4px; margin-right: 3px; }
.zoom input { appearance: none; width: 172px; height: 16px; margin: 0 5px 0 6px; background: linear-gradient(90deg, #6f7991 41%, #d2d5db 41%) center / 100% 2px no-repeat; }
.zoom input::-webkit-slider-thumb { appearance: none; width: 16px; height: 16px; border-radius: 50%; border: 1px solid #555; background: #fff; }

/* input method bar */
.ime { position: absolute; right: 68px; bottom: 20px; width: 170px; height: 32px; display: flex; align-items: center; gap: 11px; padding-left: 23px; background: #fff; border: 1px solid #bcd0e6; border-radius: 2px; color: #0a6fdb; font-size: 18px; }
.sogou { position: absolute; left: -22px; top: -6px; width: 40px; height: 38px; }
.ime .i { stroke-width: 2; }
.ime .punct { width: 20px; text-align: center; }
```
